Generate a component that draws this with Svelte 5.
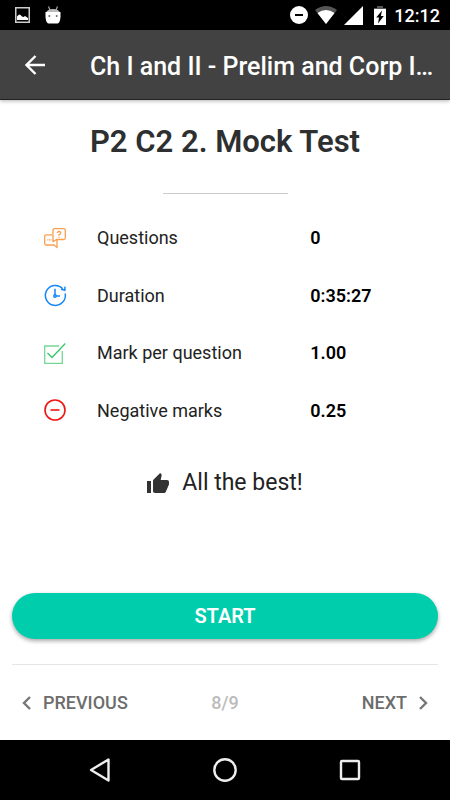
<script>
  const title = 'P2 C2 2. Mock Test';
  const details = [
    { icon: 'questions', label: 'Questions', value: '0' },
    { icon: 'duration', label: 'Duration', value: '0:35:27' },
    { icon: 'mark', label: 'Mark per question', value: '1.00' },
    { icon: 'negative', label: 'Negative marks', value: '0.25' }
  ];
</script>

<div class="screen">
  <div class="status">
    <div class="group left">
      <svg width="15" height="16" viewBox="0 0 15 16">
        <rect x="0.75" y="0.75" width="13.5" height="14.5" fill="none" stroke="#ccc" stroke-width="1.5" />
        <path d="M2 13V9.5L4 7.5L5.5 8L7 9.5L8.5 10L10 9L13 11V13Z" fill="#fff" />
      </svg>
      <svg width="16" height="18" viewBox="0 0 16 18">
        <path d="M3.5 0.5L5 4M12.5 0.5L11 4" stroke="#aaa" stroke-width="1.2" />
        <path d="M1 7Q2 3 8 3Q14 3 15 7Z" fill="#bbb" />
        <path d="M0.5 6H15.5V11Q15 17 12.5 17.5H3.5Q1 17 0.5 11Z" fill="#fff" />
        <circle cx="4.3" cy="10" r="1" fill="#666" /><circle cx="11.7" cy="10" r="1" fill="#666" />
      </svg>
    </div>
    <div class="group right">
      <svg width="18" height="18" viewBox="0 0 18 18">
        <circle cx="9" cy="9" r="9" fill="#fff" /><path d="M5 9H13" stroke="#000" stroke-width="2" />
      </svg>
      <svg width="22" height="18" viewBox="0 0 22 18">
        <path d="M0 4Q11 -4 22 4L11 18Z" fill="#555" />
        <path d="M2.5 7Q11 1 19.5 7L11 18Z" fill="#fff" />
      </svg>
      <svg width="19" height="19" viewBox="0 0 19 19"><path d="M19 0V19H0Z" fill="#fff" /></svg>
      <svg class="battery" width="12" height="19" viewBox="0 0 12 19">
        <path d="M3 0H9V2H12V6H0V2H3Z" fill="#555" />
        <path d="M0 3H12V19H0Z" fill="#fff" />
        <path d="M8 4.5L2.2 11.5H5L4 17.5L9.8 10H6.9Z" fill="#000" />
      </svg>
      <span>12:12</span>
    </div>
  </div>

  <header>
    <button class="back" aria-label="Back">
      <svg width="20" height="20" viewBox="0 0 20 20">
        <path d="M20 10H2M10.5 1L1.5 10L10.5 19" fill="none" stroke="#fff" stroke-width="2.4" />
      </svg>
    </button>
    <span class="chapter">Ch I and II - Prelim and Corp I…</span>
  </header>

  <main>
    <h1>{title}</h1>
    <hr class="short" />
    <dl>
      {#each details as item}
        <div class="row">
          <dt>
            <svg width="24" height="24" viewBox="0 0 24 24" fill="none">
              {#if item.icon === 'questions'}
                <g stroke="#f9a050" stroke-width="1.3" stroke-linejoin="round">
                  <path d="M10 8V4.2Q10 2.600 11.600 2.600H20.700Q22.300 2.600 22.300 4.200V12Q22.300 13.500 20.700 13.500H13.500L10 15.700V8.800H3.200Q1.700 8.800 1.700 10.300V17.500Q1.700 19 3.200 19H11L14 21.500V13.700" />
                  <path d="M4.300 13.800H8.500" stroke-dasharray="1.1 0.6" />
                  <path d="M14.300 7Q14.300 5.500 16 5.500Q17.800 5.500 17.800 7Q17.800 8 16 8.700V9.700M16 10.700V11.800" />
                </g>
              {:else if item.icon === 'duration'}
                <g stroke="#1688f5" stroke-width="1.5">
                  <path d="M19.800 5.700A10 10 0 1 0 22.200 10.500" />
                  <path d="M18 6.300L21.800 7.200L22 3.600" />
                  <path d="M12 5.800V12M13.200 13H17" />
                  <circle cx="12" cy="13" r="1.200" />
                </g>
              {:else if item.icon === 'mark'}
                <g stroke="#35c96b" stroke-width="1.3">
                  <path d="M16 5H1.700V22.300H19.300V10" stroke="#75d795" />
                  <path d="M4.500 12L9 16.500L22.300 2.500" />
                </g>
              {:else}
                <g stroke="#f01515" stroke-width="1.600">
                  <circle cx="12" cy="12" r="10" /><path d="M7.500 12H16.500" />
                </g>
              {/if}
            </svg>
            <span>{item.label}</span>
          </dt>
          <dd>{item.value}</dd>
        </div>
      {/each}
    </dl>
    <p class="wish">
      <svg width="22" height="20" viewBox="1 1 22 20">
        <path fill="#333" d="M1 21h4V9H1v12zm22-11c0-1.100-.9-2-2-2h-6.310l.95-4.570.03-.32c0-.41-.17-.79-.44-1.060L14.170 1 7.590 7.590C7.220 7.950 7 8.450 7 9v10c0 1.100.9 2 2 2h9c.83 0 1.540-.5 1.840-1.220l3.020-7.050c.09-.23.14-.47.14-.73v-2z" />
      </svg>
      All the best!
    </p>
    <div class="actions">
      <button class="start">START</button>
      <hr />
      <nav class="pager">
        <button>
          <svg width="9" height="14" viewBox="0 0 9 14"><path d="M8 1L2 7L8 13" fill="none" stroke="#777" stroke-width="2.4" /></svg>
          PREVIOUS
        </button>
        <span>8/9</span>
        <button class="next">
          NEXT
          <svg width="9" height="14" viewBox="0 0 9 14"><path d="M1 1L7 7L1 13" fill="none" stroke="#777" stroke-width="2.4" /></svg>
        </button>
      </nav>
    </div>
  </main>

  <div class="system">
    <button aria-label="System back">
      <svg width="24" height="26" viewBox="0 0 24 26"><path d="M20.5 2.500V23.500L3 13Z" fill="none" stroke="#eee" stroke-width="2.4" stroke-linejoin="round" /></svg>
    </button>
    <button aria-label="Home">
      <svg width="26" height="26" viewBox="0 0 26 26"><circle cx="13" cy="13" r="10.700" fill="none" stroke="#eee" stroke-width="2.4" /></svg>
    </button>
    <button aria-label="Recent apps">
      <svg width="24" height="24" viewBox="0 0 24 24"><rect x="3" y="3" width="18" height="18" rx="1" fill="none" stroke="#eee" stroke-width="2.4" /></svg>
    </button>
  </div>
</div>

<style>
  :global(body) { margin: 0; }
  .screen {
    display: flex;
    flex-direction: column;
    min-height: 100vh;
    background: #fff;
    color: #222;
    font-family: Roboto, "Liberation Sans", sans-serif;
  }
  svg { display: block; flex: none; }
  button {
    border: 0;
    padding: 0;
    background: none;
    font: inherit;
    color: inherit;
    cursor: pointer;
  }
  .status {
    display: flex;
    align-items: center;
    justify-content: space-between;
    height: 30px;
    padding: 0 10px 0 15px;
    background: #000;
    color: #fff;
    font-size: 18px;
    font-weight: 500;
  }
  .group { display: flex; align-items: center; }
  .left { gap: 15px; }
  .right { gap: 7px; }
  .battery { margin: 0 1px 0 4px; }
  header {
    display: flex;
    align-items: center;
    box-sizing: border-box;
    height: 70px;
    padding: 0 16px 0 25px;
    background: #424242;
    color: #fff;
    border-bottom: 1px solid #222;
    box-shadow: 0 1px 4px rgba(0, 0, 0, 0.3);
  }
  .back { margin-right: 45px; }
  .chapter {
    flex: 1;
    overflow: hidden;
    padding-top: 4px;
    white-space: nowrap;
    font-size: 25px;
    font-weight: 500;
  }
  main {
    flex: 1;
    display: flex;
    flex-direction: column;
    padding: 24px 12px 0;
  }
  h1 {
    margin: 0;
    text-align: center;
    font-size: 31px;
    line-height: 36px;
    font-weight: 600;
    color: #2d2f30;
  }
  hr {
    width: 100%;
    height: 1px;
    margin: 0;
    border: 0;
    background: #e6e6e6;
  }
  .short {
    width: 125px;
    margin: 33px auto 15px;
    background: #ccc;
  }
  dl {
    display: grid;
    grid-template-rows: repeat(4, 1fr);
    height: 230px;
    margin: 0 0 0 31px;
  }
  .row {
    display: grid;
    grid-template-columns: 2fr 1fr;
    align-items: center;
    font-size: 18px;
  }
  dt { display: flex; align-items: center; gap: 30px; }
  dd { margin: 0; padding-left: 4px; color: #000; font-weight: 600; }
  .wish {
    display: flex;
    align-items: center;
    justify-content: center;
    gap: 13px;
    margin: 30px 0 24px;
    font-size: 23px;
    line-height: 28px;
  }
  .actions { margin-top: auto; }
  .start {
    display: block;
    width: 100%;
    height: 46px;
    margin-bottom: 25px;
    border-radius: 23px;
    background: #00cdac;
    color: #fff;
    font-size: 20px;
    font-weight: 600;
    box-shadow: 0 2px 4px rgba(0, 0, 0, 0.35);
  }
  .pager {
    display: grid;
    grid-template-columns: 1fr auto 1fr;
    align-items: center;
    height: 75px;
    padding: 0 10px;
    font-size: 18px;
    font-weight: 500;
    color: #bbb;
  }
  .pager button {
    display: flex;
    align-items: center;
    gap: 12px;
    color: #6c6c6c;
  }
  .next { justify-self: end; }
  .system {
    display: flex;
    justify-content: space-around;
    align-items: center;
    height: 60px;
    padding: 0 38px;
    background: #000;
  }
</style>
